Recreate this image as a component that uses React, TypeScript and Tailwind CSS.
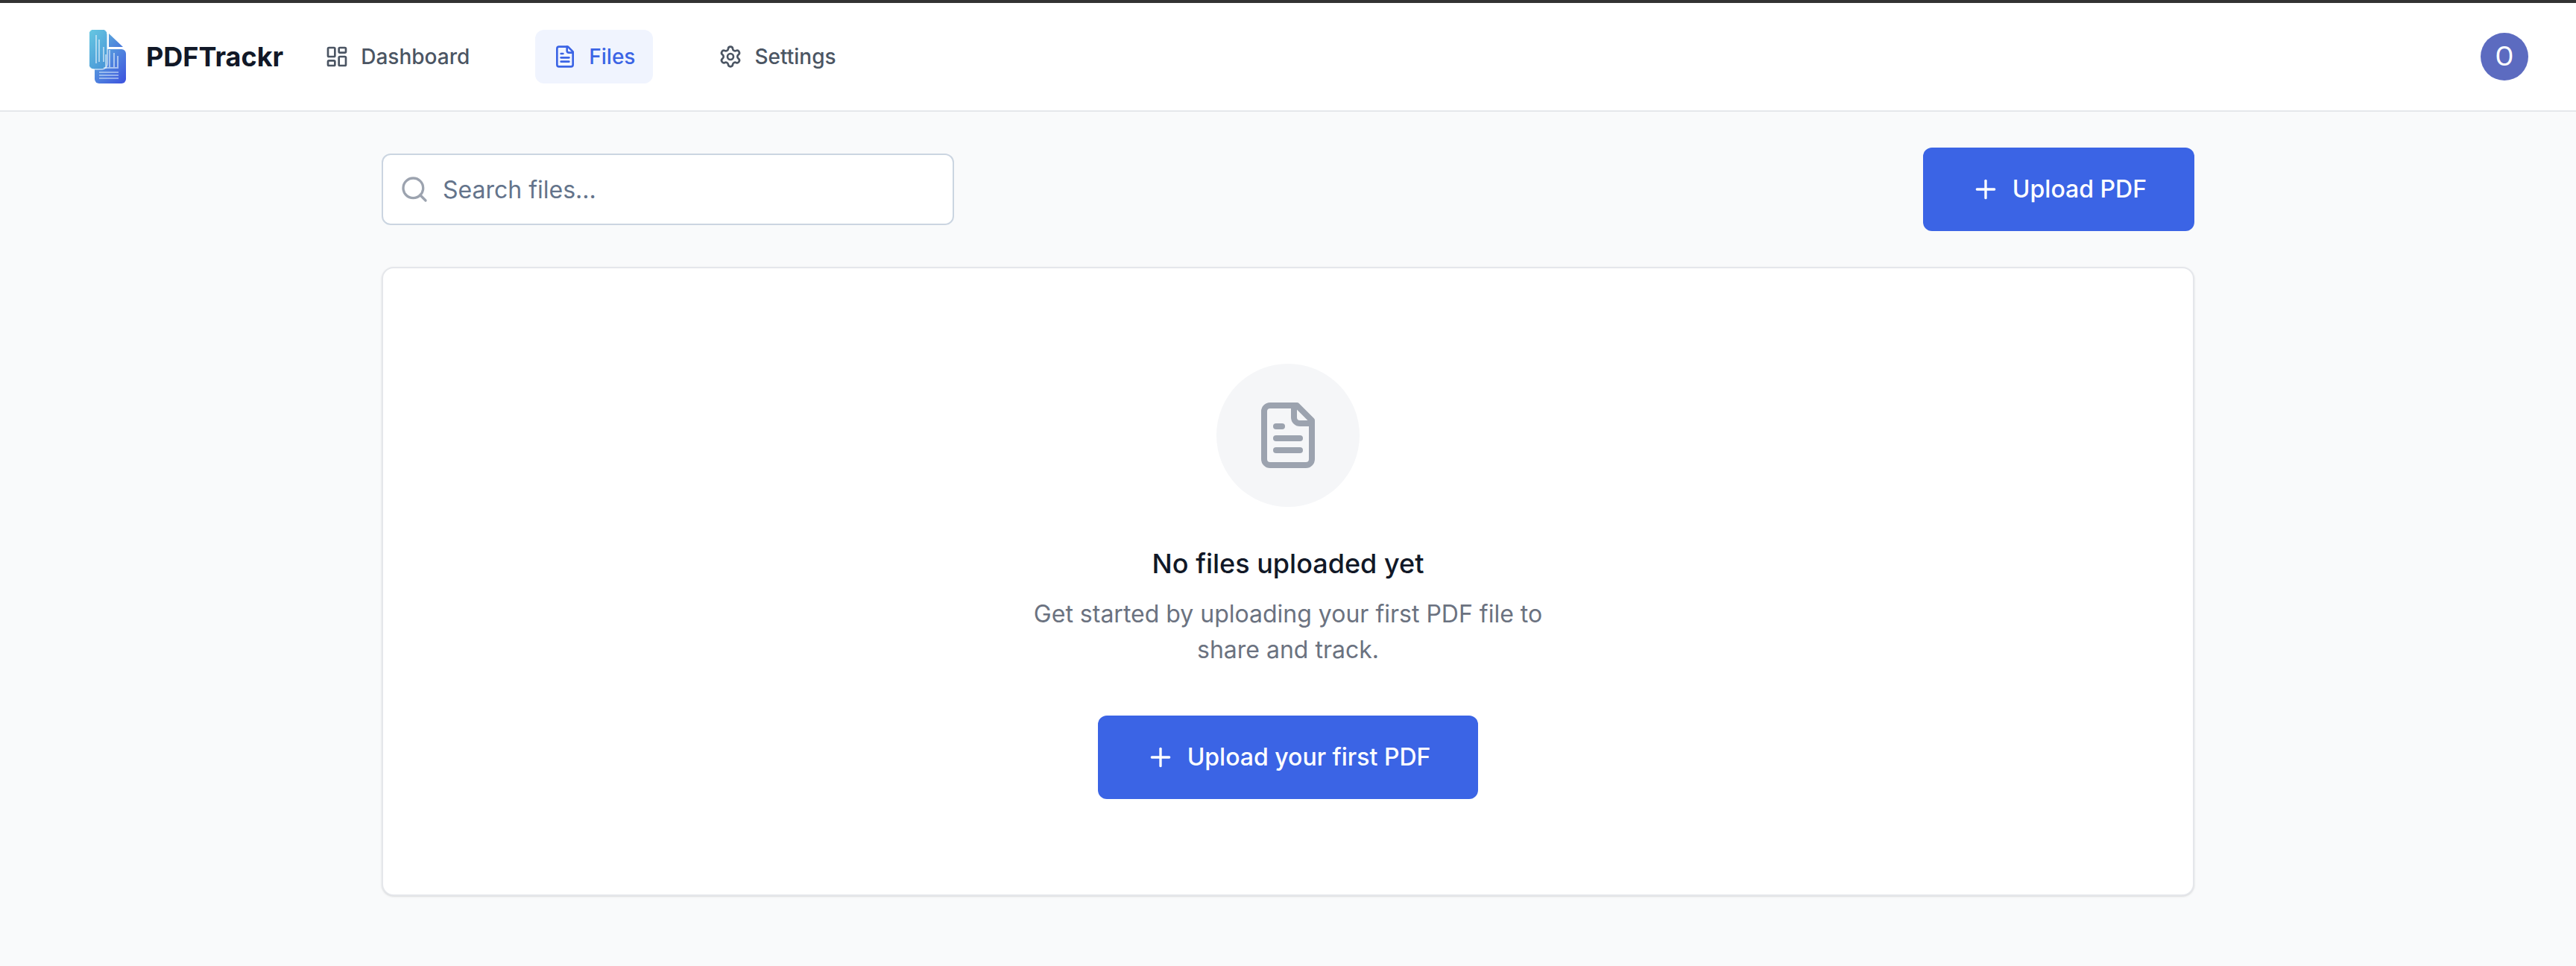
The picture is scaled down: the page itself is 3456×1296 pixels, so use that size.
import { LayoutDashboard, Plus, Search, Settings } from 'lucide-react'

const FileIcon = ({ className }: { className: string }) => (
  <svg viewBox="0 0 24 24" fill="none" stroke="currentColor" strokeWidth="2" strokeLinecap="round" strokeLinejoin="round" className={className}>
    <path d="M15 2H6a2 2 0 0 0-2 2v16a2 2 0 0 0 2 2h12a2 2 0 0 0 2-2V7Z" />
    <path d="M14 2v4a2 2 0 0 0 2 2h4" />
    <path d="M10 9H8" />
    <path d="M16 13H8" />
    <path d="M16 17H8" />
  </svg>
)

const Logo = () => (
  <svg viewBox="0 0 50 73" className="w-[50px] h-[73px] shrink-0">
    <defs>
      <linearGradient id="logoA" x1="0" y1="0" x2="0.6" y2="1">
        <stop offset="0" stopColor="#68c9e2" />
        <stop offset="1" stopColor="#4b9ad8" />
      </linearGradient>
      <linearGradient id="logoB" x1="0" y1="0" x2="1" y2="1">
        <stop offset="0" stopColor="#5fb0de" />
        <stop offset="1" stopColor="#3c50de" />
      </linearGradient>
      <linearGradient id="logoC" x1="0" y1="0" x2="1" y2="1">
        <stop offset="0" stopColor="#58a4dc" />
        <stop offset="1" stopColor="#4a78dc" />
      </linearGradient>
    </defs>
    <path d="M26 5 L45 23 H26 Z" fill="url(#logoC)" />
    <rect x="7" y="26" width="42" height="46" rx="6" fill="url(#logoB)" />
    <rect x="-1" y="-1" width="25" height="54" rx="7" fill="url(#logoA)" stroke="#ffffff" strokeWidth="1" />
    <g stroke="#e4f2fb" strokeWidth="1.2" fill="none">
      <path d="M9 7V45M13 13V43M19 23V43M22 33V52M27 27V50M33 31V50M38 35V50" />
      <path d="M19 51H39" />
      <path d="M13 57H39M13 61H39M13 65H39" />
    </g>
  </svg>
)

const navItems = [
  { label: 'Dashboard', Icon: LayoutDashboard, active: false },
  { label: 'Files', Icon: FileIcon, active: true },
  { label: 'Settings', Icon: Settings, active: false },
]

const App = () => {
  return (
    <div className="min-h-[1296px] bg-[#f9fafb] font-['Inter',sans-serif]">
      <div className="h-1 bg-[#333333]" />
      <header className="h-[146px] bg-white border-b-2 border-[#e5e7eb] flex items-center justify-between pl-[120px] pr-16">
        <div className="flex items-center">
          <div className="flex items-center gap-[26px] mr-8">
            <Logo />
            <span className="text-[36px] leading-[56px] font-bold text-[#111827]">PDFTrackr</span>
          </div>
          <nav className="flex items-center gap-16">
            {navItems.map(({ label, Icon, active }) => (
              <a
                key={label}
                className={`h-[72px] px-6 flex items-center gap-4 rounded-xl text-[28px] font-medium ${
                  active ? 'bg-[#f0f4fe] text-[#3b64e5]' : 'text-[#4b5563]'
                }`}
              >
                <Icon className="w-8 h-8" />
                {label}
              </a>
            ))}
          </nav>
        </div>
        <div className="w-16 h-16 rounded-full bg-[#5c6bc0] text-white text-[36px] font-['Roboto',sans-serif] flex items-center justify-center">
          O
        </div>
      </header>

      <main className="w-[2432px] mx-auto pt-12">
        <div className="flex items-center justify-between mb-12">
          <div className="w-[768px] h-24 bg-white border-2 border-[#cbd5e1] rounded-xl flex items-center pl-[22px] gap-[18px]">
            <Search className="w-10 h-10 text-[#9ca3af]" />
            <span className="text-[32px] text-[#64748b] pt-px">Search files...</span>
          </div>
          <button className="h-28 px-16 bg-[#3b64e5] rounded-xl flex items-center gap-4 text-white text-[32px] font-medium">
            <Plus className="w-10 h-10" />
            Upload PDF
          </button>
        </div>

        <section className="h-[844px] bg-white border-2 border-[#e5e7eb] rounded-2xl shadow-sm flex flex-col items-center pt-32">
          <div className="w-48 h-48 rounded-full bg-[#f5f6f8] flex items-center justify-center mb-12">
            <FileIcon className="w-24 h-24 text-[#9ca3af]" />
          </div>
          <h3 className="text-[36px] leading-[56px] font-medium text-[#111827] mb-4">No files uploaded yet</h3>
          <p className="w-[720px] text-[32px] leading-[48px] text-[#6b7280] text-center mb-16">
            Get started by uploading your first PDF file to share and track.
          </p>
          <button className="h-28 px-16 bg-[#3b64e5] rounded-xl flex items-center gap-4 text-white text-[32px] font-medium">
            <Plus className="w-10 h-10" />
            Upload your first PDF
          </button>
        </section>
      </main>
    </div>
  )
}

export default App
